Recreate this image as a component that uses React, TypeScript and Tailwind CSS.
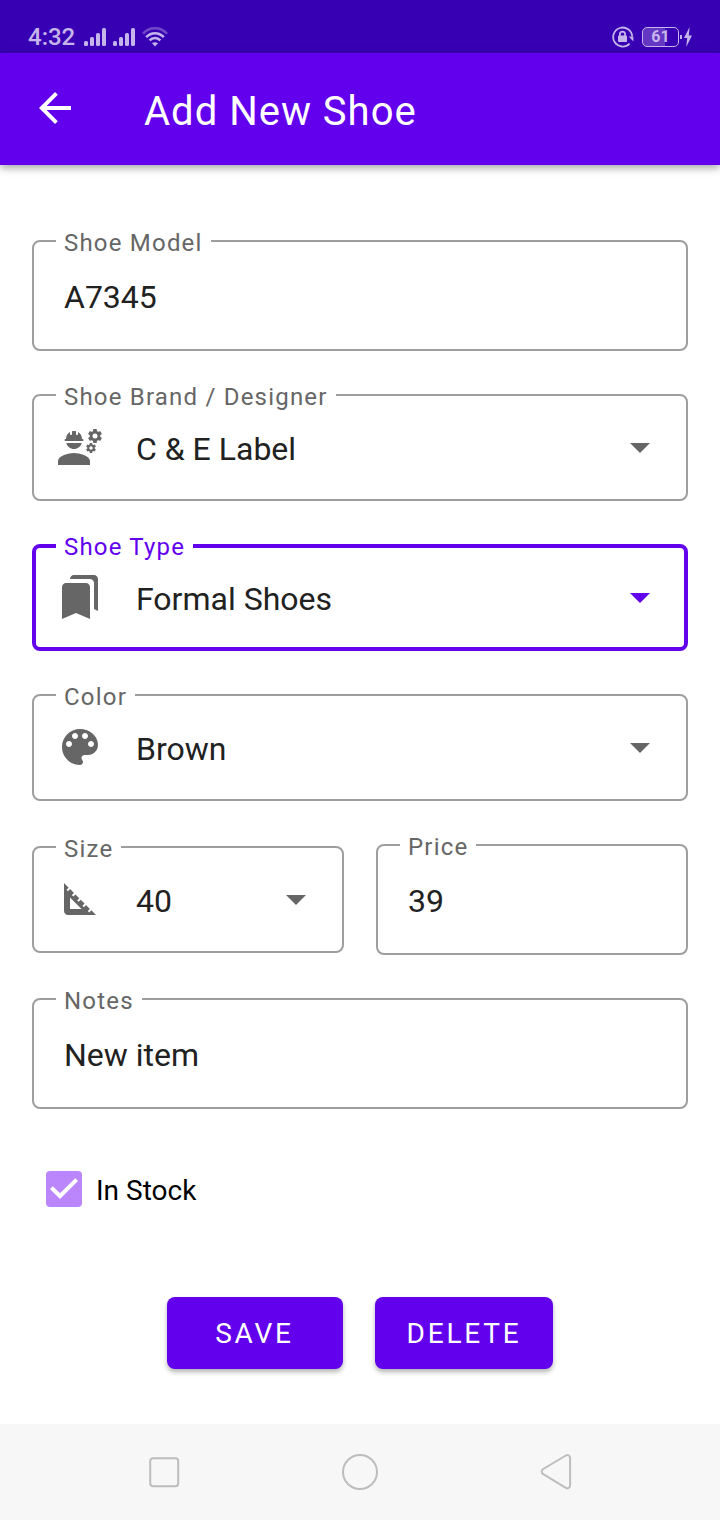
import { useState, type ReactNode } from "react";
import {
  MdArrowBack,
  MdArrowDropDown,
  MdBookmarks,
  MdEngineering,
  MdSquareFoot,
} from "react-icons/md";

function SignalIcon() {
  return (
    <svg viewBox="0 0 22 18" className="h-[18px] w-[22px]" fill="currentColor" aria-hidden="true">
      <rect x="0" y="13" width="4" height="5" rx="1.5" />
      <rect x="6" y="9" width="4" height="9" rx="1.5" />
      <rect x="12" y="5" width="4" height="13" rx="1.5" />
      <rect x="18" y="0" width="4" height="18" rx="1.5" />
    </svg>
  );
}

function WifiIcon() {
  return (
    <svg viewBox="0 0 26 20" className="h-5 w-[26px]" fill="none" stroke="currentColor" strokeWidth="2.6" aria-hidden="true">
      <path d="M1 6.6C8-.6 18-.6 25 6.6" opacity="0.4" />
      <path d="M4.2 10.2c5-5.2 12.6-5.2 17.6 0" />
      <path d="M7.6 13.4c3.2-3 7.6-3 10.8 0" />
      <path d="M10 16.2c1.8-1.4 4.2-1.4 6 0L13 19.6z" fill="currentColor" stroke="none" />
    </svg>
  );
}

function RotationLockIcon() {
  return (
    <svg viewBox="0 0 22 22" className="size-[22px]" fill="none" stroke="currentColor" aria-hidden="true">
      <path d="M17.6 17.6A9.5 9.5 0 1 1 20.2 10.5" strokeWidth="1.8" />
      <path d="M16.8 10.6h4.6v4.8z" fill="currentColor" stroke="none" />
      <rect x="6" y="9.6" width="9" height="6.4" rx="0.8" fill="currentColor" stroke="none" />
      <path d="M7.9 10V8.2a2.6 2.6 0 0 1 5.2 0V10" strokeWidth="1.8" />
    </svg>
  );
}

function PaletteIcon() {
  return (
    <svg viewBox="0 0 24 24" className="size-12" fill="currentColor" aria-hidden="true">
      <path d="M12 3c-4.97 0-9 4.03-9 9s4.03 9 9 9c.83 0 1.5-.67 1.5-1.5 0-.39-.15-.74-.39-1.01-.23-.26-.38-.61-.38-.99 0-.83.67-1.5 1.5-1.5H16c2.76 0 5-2.24 5-5 0-4.42-4.03-8-9-8zm-5.5 9c-.83 0-1.5-.67-1.5-1.5S5.67 9 6.5 9 8 9.67 8 10.5 7.33 12 6.5 12zm3-4C8.67 8 8 7.33 8 6.5S8.67 5 9.5 5s1.5.67 1.5 1.5S10.33 8 9.5 8zm5 0c-.83 0-1.5-.67-1.5-1.5S13.67 5 14.5 5s1.5.67 1.5 1.5S15.33 8 14.5 8zm3 4c-.83 0-1.5-.67-1.5-1.5S16.67 9 17.5 9s1.5.67 1.5 1.5-.67 1.5-1.5 1.5z" />
    </svg>
  );
}

function StatusBar() {
  return (
    <div className="flex h-[53px] items-end justify-between bg-[#3700b3] px-7 text-[#c6b5ea]">
      <div className="flex items-center">
        <span className="text-2xl font-medium">4:32</span>
        <span className="ml-[9px] flex items-center gap-[7px]">
          <SignalIcon />
          <SignalIcon />
          <WifiIcon />
        </span>
      </div>
      <div className="flex h-8 items-center">
        <RotationLockIcon />
        <span className="ml-2 flex h-5 w-[37px] items-center justify-center rounded-[5px] border border-current bg-linear-to-r from-[#6336c3] from-62% to-transparent to-62% text-base font-bold">
          61
        </span>
        <span className="ml-px h-1 w-0.5 bg-current" />
        <svg viewBox="0 0 8 20" className="ml-0.5 h-5 w-2" fill="currentColor" aria-hidden="true">
          <path d="M5.6 0 0 11h3.2L2.2 20 8 8.4H4.8z" />
        </svg>
      </div>
    </div>
  );
}

type FieldProps = {
  id: string;
  label: string;
  active?: boolean;
  children: ReactNode;
};

function Outline({ id, label, active, children }: FieldProps) {
  return (
    <div
      className={`relative min-w-0 flex-1 rounded-lg ${
        active ? "border-4 border-[#6200ee] text-[#6200ee]" : "border-2 border-[#9e9e9e] text-[#666666]"
      }`}
    >
      <label
        htmlFor={id}
        className={`absolute bg-white px-2 text-2xl/[26px] tracking-wider ${
          active ? "-top-3.5 left-5" : "-top-3 left-[22px]"
        }`}
      >
        {label}
      </label>
      {children}
    </div>
  );
}

function TextField({ id, label, initial }: { id: string; label: string; initial: string }) {
  return (
    <Outline id={id} label={label}>
      <input
        id={id}
        type="text"
        defaultValue={initial}
        className="block h-[107px] w-full bg-transparent px-[30px] pt-0.5 text-[32px] text-[#212121] outline-none"
      />
    </Outline>
  );
}

type SelectFieldProps = {
  id: string;
  label: string;
  options: string[];
  icon: ReactNode;
  active?: boolean;
};

function SelectField({ id, label, options, icon, active }: SelectFieldProps) {
  return (
    <Outline id={id} label={label} active={active}>
      <div className={`flex items-center pb-0.5 ${active ? "h-[99px] px-5" : "h-[103px] px-[22px]"}`}>
        <span className="shrink-0 text-5xl text-[#666666]">{icon}</span>
        <select
          id={id}
          defaultValue={options[0]}
          className="ml-8 h-full min-w-0 flex-1 appearance-none bg-transparent pt-1 text-[32px] text-[#212121] outline-none"
        >
          {options.map((option) => (
            <option key={option}>{option}</option>
          ))}
        </select>
        <MdArrowDropDown className="pointer-events-none size-12 shrink-0" />
      </div>
    </Outline>
  );
}

function NavigationBar() {
  return (
    <nav className="flex h-24 items-center justify-center gap-[148px] bg-[#f7f7f7] text-[#bdbdbd]">
      <button type="button" aria-label="Recent apps" className="size-12">
        <svg viewBox="0 0 48 48" fill="none" stroke="currentColor" strokeWidth="2">
          <rect x="10.2" y="10.2" width="28" height="28" rx="3" />
        </svg>
      </button>
      <button type="button" aria-label="Home" className="size-12">
        <svg viewBox="0 0 48 48" fill="none" stroke="currentColor" strokeWidth="2">
          <circle cx="24" cy="24" r="17" />
        </svg>
      </button>
      <button type="button" aria-label="Back" className="size-12">
        <svg viewBox="0 0 48 48" fill="none" stroke="currentColor" strokeWidth="2" strokeLinejoin="round">
          <path d="M33.9 7.5 11.2 21a3 3 0 0 0 0 5.2L33.9 39.9a2.8 2.8 0 0 0 4.2-2.4V9.9a2.8 2.8 0 0 0-4.2-2.4z" />
        </svg>
      </button>
    </nav>
  );
}

export default function App() {
  const [inStock, setInStock] = useState(true);

  return (
    <div className="flex min-h-screen flex-col bg-white font-[Roboto,sans-serif]">
      <StatusBar />
      <header className="flex h-28 items-center bg-[#6200ee] px-[31px] pb-0.5 text-white shadow-[0_3px_8px_rgba(0,0,0,0.35)]">
        <button type="button" aria-label="Back" className="text-5xl">
          <MdArrowBack />
        </button>
        <h1 className="ml-[65px] pt-2 text-[40px] tracking-wide">Add New Shoe</h1>
      </header>

      <form className="flex flex-1 flex-col px-8 pt-[75px]" onSubmit={(event) => event.preventDefault()}>
        <div className="flex flex-col gap-[43px]">
          <TextField id="model" label="Shoe Model" initial="A7345" />
          <SelectField id="brand" label="Shoe Brand / Designer" options={["C & E Label"]} icon={<MdEngineering />} />
          <SelectField id="type" label="Shoe Type" options={["Formal Shoes"]} icon={<MdBookmarks />} active />
          <SelectField id="color" label="Color" options={["Brown"]} icon={<PaletteIcon />} />
          <div className="flex items-center gap-8">
            <SelectField id="size" label="Size" options={["40"]} icon={<MdSquareFoot />} />
            <TextField id="price" label="Price" initial="39" />
          </div>
          <TextField id="notes" label="Notes" initial="New item" />
        </div>

        <label className="mt-[60px] flex items-center gap-3.5 self-start pl-3.5 text-[28px]/9 text-black">
          <span className="grid size-9">
            <input
              type="checkbox"
              checked={inStock}
              onChange={(event) => setInStock(event.target.checked)}
              className="col-start-1 row-start-1 size-9 appearance-none rounded border-4 border-[#bb86fc] checked:bg-[#bb86fc]"
            />
            {inStock && (
              <svg
                viewBox="3 3 18 18"
                className="pointer-events-none col-start-1 row-start-1 size-9 text-white"
                fill="currentColor"
                aria-hidden="true"
              >
                <path d="m10 17-5-5 1.41-1.41L10 14.17l7.59-7.59L19 8z" />
              </svg>
            )}
          </span>
          <span className="pt-1">In Stock</span>
        </label>

        <div className="mt-[88px] mb-10 flex justify-center gap-8 text-[28px] text-white">
          <button
            type="submit"
            className="h-[72px] min-w-44 rounded-lg bg-[#6200ee] px-8 pt-0.5 tracking-widest shadow-[0_3px_5px_rgba(0,0,0,0.3)]"
          >
            SAVE
          </button>
          <button
            type="button"
            className="h-[72px] min-w-44 rounded-lg bg-[#6200ee] px-8 pt-0.5 tracking-widest shadow-[0_3px_5px_rgba(0,0,0,0.3)]"
          >
            DELETE
          </button>
        </div>
      </form>

      <NavigationBar />
    </div>
  );
}
